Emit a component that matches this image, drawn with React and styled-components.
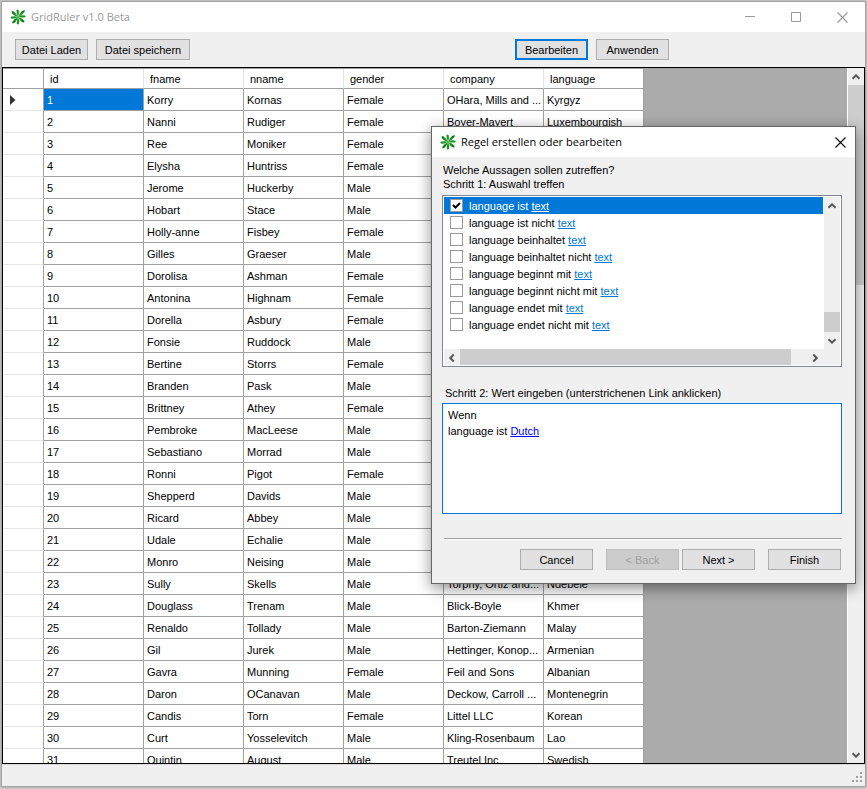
import React from "react";
import styled, { createGlobalStyle } from "styled-components";

const blue = "#0078d7";
const face = "#f0f0f0";
const line = "#a0a0a0";

const GlobalStyle = createGlobalStyle`
  *, *::before, *::after { box-sizing: border-box; }
  body {
    margin: 0;
    background: #d6d6d6;
    color: #000;
    font: 11px/14px "Liberation Sans", Arial, sans-serif;
  }
`;

const Desktop = styled.div`
  position: relative;
  display: flex;
  flex-direction: column;
  height: 100vh;
  padding: 1px 1px 2px;
  overflow: hidden;
`;

const Window = styled.main`
  flex: 1;
  min-height: 0;
  display: flex;
  flex-direction: column;
  border: 1px solid #a3a3a3;
  background: ${face};
  box-shadow: 0 0 4px rgba(0, 0, 0, 0.3);
`;

const TitleBar = styled.header`
  flex: none;
  display: flex;
  align-items: center;
  gap: 5px;
  height: 30px;
  padding-left: 8px;
  background: #fff;
  color: ${(p) => (p.$active ? "#000" : "#999")};
`;

const Title = styled.h1`
  flex: 1;
  margin: 0;
  font: 400 11px/16px "Open Sans", "Noto Sans", sans-serif;
`;

const CaptionButtons = styled.div`
  display: flex;
`;

const CaptionButton = styled.button`
  display: grid;
  place-items: center;
  width: ${(p) => (p.$narrow ? 30 : 46)}px;
  height: 30px;
  padding: 0;
  border: 0;
  background: none;
  color: inherit;
`;

const Toolbar = styled.div`
  flex: none;
  display: flex;
  justify-content: space-between;
  padding: 7px 196px 7px 13px;
`;

const ButtonGroup = styled.div`
  display: flex;
  gap: ${(p) => p.$gap || 8}px;
`;

const Button = styled.button`
  width: ${(p) => (p.$wide ? 94 : 73)}px;
  height: 21px;
  padding: 0;
  border: ${(p) => (p.$focused ? `2px solid ${blue}` : "1px solid #adadad")};
  background: #e1e1e1;
  color: #000;
  font: inherit;
  white-space: nowrap;
  &:disabled {
    border-color: #bfbfbf;
    background: #ccc;
    color: #a0a0a0;
  }
`;

const GridFrame = styled.section`
  flex: 1;
  min-height: 0;
  display: flex;
  border: 1px solid #000;
  background: #ababab;
`;

const GridView = styled.div`
  flex: 1;
  min-width: 0;
  overflow: hidden;
  border-top: 1px solid ${line};
`;

const Table = styled.table`
  width: 641px;
  table-layout: fixed;
  border-collapse: separate;
  border-spacing: 0;
  background: #fff;
`;

const MarkerCol = styled.col`
  width: 41px;
`;

const HeadCell = styled.th`
  height: 20px;
  padding: 0 6px;
  border-right: 1px solid #e5e5e5;
  border-bottom: 1px solid ${line};
  font-weight: 400;
  text-align: left;
  &:first-child, &:last-child { border-right-color: ${line}; }
`;

const RowHead = styled.th`
  height: 22px;
  padding: 0 0 0 7px;
  border-right: 1px solid ${line};
  border-bottom: 1px solid #e5e5e5;
  text-align: left;
  svg { display: block; }
`;

const Cell = styled.td`
  height: 22px;
  padding: 0 3px;
  border-right: 1px solid ${line};
  border-bottom: 1px solid ${line};
  background: ${(p) => (p.$selected ? blue : "#fff")};
  color: ${(p) => (p.$selected ? "#fff" : "#000")};
  white-space: nowrap;
  overflow: hidden;
`;

const VScroll = styled.div`
  flex: none;
  display: flex;
  flex-direction: column;
  width: 17px;
  border-left: 1px solid #fff;
  background: ${face};
`;

const HScroll = styled.div`
  display: flex;
  height: 16px;
  background: ${face};
`;

const ScrollButton = styled.button`
  flex: none;
  display: grid;
  place-items: center;
  width: 16px;
  height: 17px;
  padding: 0;
  border: 0;
  background: none;
`;

const Thumb = styled.div`
  flex: ${(p) => p.$share} 0 0;
  background: #cdcdcd;
`;

const Track = styled.div`
  flex: ${(p) => p.$share} 0 0;
`;

const StatusBar = styled.footer`
  flex: none;
  display: flex;
  align-items: flex-end;
  justify-content: flex-end;
  height: 22px;
  padding: 0 2px 3px 0;
  border-top: 1px solid #d7d7d7;
`;

const Dialog = styled.section`
  position: absolute;
  top: 126px;
  right: 11px;
  width: 425px;
  border: 1px solid #666;
  background: ${face};
  box-shadow: 0 4px 14px rgba(0, 0, 0, 0.45);
`;

const DialogBody = styled.div`
  display: flex;
  flex-direction: column;
  padding: 6px 13px 13px 10px;
`;

const Prompt = styled.p`
  margin: 0;
  padding-left: 1px;
`;

const ListBox = styled.div`
  display: grid;
  grid-template-columns: 1fr 17px;
  margin-top: 4px;
  padding: 1px;
  border: 1px solid #828790;
  background: #fff;
`;

const RuleList = styled.ul`
  height: 152px;
  margin: 0;
  padding: 0;
  list-style: none;
`;

const Rule = styled.li`
  display: flex;
  align-items: center;
  gap: 6px;
  height: 17px;
  padding-left: 6px;
  background: ${(p) => (p.$selected ? blue : "transparent")};
  color: ${(p) => (p.$selected ? "#fff" : "#000")};
`;

const CheckSlot = styled.span`
  display: grid;
  place-items: center;
  > * { grid-area: 1 / 1; }
  svg { pointer-events: none; }
`;

const CheckBox = styled.input`
  appearance: none;
  width: 13px;
  height: 13px;
  margin: 0;
  border: 1px solid #999;
  background: #fff;
`;

const RuleLink = styled.a`
  color: ${(p) => (p.$tone || blue)};
  text-decoration: underline;
`;

const StepLabel = styled.h2`
  margin: 19px 0 3px 3px;
  font: inherit;
`;

const ValueBox = styled.div`
  height: 111px;
  padding: 3px 5px;
  border: 1px solid ${blue};
  background: #fff;
  line-height: 16px;
  p { margin: 0; }
`;

const Divider = styled.hr`
  align-self: stretch;
  height: 2px;
  margin: 24px 0 9px 2px;
  border: 0;
  border-top: 1px solid ${line};
  border-bottom: 1px solid #fff;
`;

const Actions = styled.div`
  display: flex;
  justify-content: flex-end;
  gap: 13px;
  padding-right: 1px;
`;

const petals = [
  "M8 8 L6.8 4.5 6.4 1.2 7.6 .6 8.8 1.6 8.9 4.5Z",
  "M8 8 L9.8 4.8 12 2 14.6 1 14.6 2.8 12 5.4Z",
  "M8 8 L11.5 6.2 15 6.4 15.8 7.4 14.6 8.6 11.5 8.6Z",
  "M8 8 L11.6 9.6 14.4 11.8 14.2 13.4 12.4 13.2 10 11.2Z",
  "M8 8 L9.2 11.4 9 14.6 7.8 15.8 6.8 14.4 7 11.2Z",
  "M8 8 L6.6 11 4.4 14 2.4 14.6 2.4 12.8 4.6 10.2Z",
  "M8 8 L4.6 9.4 1.4 9.8 .4 8.8 1.4 7.6 4.6 7.2Z",
  "M8 8 L4.6 6.4 1.8 4.2 1.6 2.2 3.4 2.2 6 4.8Z",
];

const Clover = () => (
  <svg width="16" height="16" viewBox="0 0 16 16" aria-hidden="true">
    {petals.map((d, i) => (
      <path key={d} d={d} fill={i % 2 ? "#0a8010" : "#17981f"} />
    ))}
    <path d="M8 8 4 4.2M8 8 12 11.4M8 8 12.6 3.6" stroke="#5cbb60" strokeWidth=".5" />
  </svg>
);

const CloseIcon = () => (
  <svg width="11" height="11" viewBox="0 0 11 11" aria-hidden="true">
    <path d="M.5 .5 10.5 10.5M10.5 .5 .5 10.5" stroke="currentColor" strokeWidth="1.1" />
  </svg>
);

const chevrons = {
  up: "M1.5 6.7 5 3.3 8.5 6.7",
  down: "M1.5 3.3 5 6.7 8.5 3.3",
  left: "M6.7 1.5 3.3 5 6.7 8.5",
  right: "M3.3 1.5 6.7 5 3.3 8.5",
};

const Arrow = ({ dir }) => (
  <ScrollButton type="button" aria-label={`Scroll ${dir}`}>
    <svg width="10" height="10" viewBox="0 0 10 10" aria-hidden="true">
      <path d={chevrons[dir]} fill="none" stroke="#555" strokeWidth="2" />
    </svg>
  </ScrollButton>
);

const columns = ["id", "fname", "nname", "gender", "company", "language"];

const people = [
  ["Korry", "Kornas", "Female", "OHara, Mills and ...", "Kyrgyz"],
  ["Nanni", "Rudiger", "Female", "Boyer-Mayert", "Luxembourgish"],
  ["Ree", "Moniker", "Female"],
  ["Elysha", "Huntriss", "Female"],
  ["Jerome", "Huckerby", "Male"],
  ["Hobart", "Stace", "Male"],
  ["Holly-anne", "Fisbey", "Female"],
  ["Gilles", "Graeser", "Male"],
  ["Dorolisa", "Ashman", "Female"],
  ["Antonina", "Highnam", "Female"],
  ["Dorella", "Asbury", "Female"],
  ["Fonsie", "Ruddock", "Male"],
  ["Bertine", "Storrs", "Female"],
  ["Branden", "Pask", "Male"],
  ["Brittney", "Athey", "Female"],
  ["Pembroke", "MacLeese", "Male"],
  ["Sebastiano", "Morrad", "Male"],
  ["Ronni", "Pigot", "Female"],
  ["Shepperd", "Davids", "Male"],
  ["Ricard", "Abbey", "Male"],
  ["Udale", "Echalie", "Male"],
  ["Monro", "Neising", "Male"],
  ["Sully", "Skells", "Male", "Torphy, Ortiz and...", "Ndebele"],
  ["Douglass", "Trenam", "Male", "Blick-Boyle", "Khmer"],
  ["Renaldo", "Tollady", "Male", "Barton-Ziemann", "Malay"],
  ["Gil", "Jurek", "Male", "Hettinger, Konop...", "Armenian"],
  ["Gavra", "Munning", "Female", "Feil and Sons", "Albanian"],
  ["Daron", "OCanavan", "Male", "Deckow, Carroll ...", "Montenegrin"],
  ["Candis", "Torn", "Female", "Littel LLC", "Korean"],
  ["Curt", "Yosselevitch", "Male", "Kling-Rosenbaum", "Lao"],
  ["Quintin", "August", "Male", "Treutel Inc", "Swedish"],
];

const rules = [
  "language ist",
  "language ist nicht",
  "language beinhaltet",
  "language beinhaltet nicht",
  "language beginnt mit",
  "language beginnt nicht mit",
  "language endet mit",
  "language endet nicht mit",
];

const DataGrid = () => (
  <GridFrame>
    <GridView>
      <Table>
        <colgroup>
          <MarkerCol />
          {columns.map((c) => <col key={c} />)}
        </colgroup>
        <thead>
          <tr>
            <HeadCell />
            {columns.map((c) => <HeadCell key={c} scope="col">{c}</HeadCell>)}
          </tr>
        </thead>
        <tbody>
          {people.map((person, i) => (
            <tr key={i}>
              <RowHead>
                {i === 0 && (
                  <svg width="6" height="10" viewBox="0 0 6 10" aria-hidden="true">
                    <path d="M0 0 5.5 5 0 10Z" fill="#333" />
                  </svg>
                )}
              </RowHead>
              <Cell $selected={i === 0}>{i + 1}</Cell>
              {columns.slice(1).map((c, k) => <Cell key={c}>{person[k]}</Cell>)}
            </tr>
          ))}
        </tbody>
      </Table>
    </GridView>
    <VScroll>
      <Arrow dir="up" />
      <Thumb $share={200} />
      <Track $share={460} />
      <Arrow dir="down" />
    </VScroll>
  </GridFrame>
);

const RuleDialog = () => (
  <Dialog role="dialog" aria-labelledby="dialog-title">
    <TitleBar $active>
      <Clover />
      <Title as="h2" id="dialog-title">Regel erstellen oder bearbeiten</Title>
      <CaptionButton type="button" $narrow aria-label="Close"><CloseIcon /></CaptionButton>
    </TitleBar>
    <DialogBody>
      <Prompt>Welche Aussagen sollen zutreffen?</Prompt>
      <Prompt>Schritt 1: Auswahl treffen</Prompt>
      <ListBox>
        <RuleList>
          {rules.map((text, i) => (
            <Rule key={text} $selected={i === 0}>
              <CheckSlot>
                <CheckBox type="checkbox" id={`rule-${i}`} defaultChecked={i === 0} />
                {i === 0 && (
                  <svg width="9" height="9" viewBox="0 0 9 9" aria-hidden="true">
                    <path d="M1 4 3.5 6.5 8 2" fill="none" stroke="#000" strokeWidth="2" />
                  </svg>
                )}
              </CheckSlot>
              <span>
                <label htmlFor={`rule-${i}`}>{text}</label>{" "}
                <RuleLink href="#text" $tone={i === 0 ? "#fff" : blue}>text</RuleLink>
              </span>
            </Rule>
          ))}
        </RuleList>
        <VScroll>
          <Arrow dir="up" />
          <Track $share={97} />
          <Thumb $share={20} />
          <Arrow dir="down" />
        </VScroll>
        <HScroll>
          <Arrow dir="left" />
          <Thumb $share={330} />
          <Track $share={16} />
          <Arrow dir="right" />
        </HScroll>
        <HScroll />
      </ListBox>
      <StepLabel>Schritt 2: Wert eingeben (unterstrichenen Link anklicken)</StepLabel>
      <ValueBox>
        <p>Wenn</p>
        <p>language ist <RuleLink href="#value" $tone="#0000ff">Dutch</RuleLink></p>
      </ValueBox>
      <Divider />
      <Actions>
        <Button type="button">Cancel</Button>
        <ButtonGroup $gap={3}>
          <Button type="button" disabled>&lt; Back</Button>
          <Button type="button">Next &gt;</Button>
        </ButtonGroup>
        <Button type="button">Finish</Button>
      </Actions>
    </DialogBody>
  </Dialog>
);

export default function App() {
  return (
    <Desktop>
      <GlobalStyle />
      <Window>
        <TitleBar>
          <Clover />
          <Title>GridRuler v1.0 Beta</Title>
          <CaptionButtons>
            <CaptionButton type="button" aria-label="Minimize">
              <svg width="10" height="10" aria-hidden="true"><path d="M0 4.5H10" stroke="currentColor" /></svg>
            </CaptionButton>
            <CaptionButton type="button" aria-label="Maximize">
              <svg width="10" height="10" aria-hidden="true"><path d="M.5 .5H9.5V9.5H.5Z" fill="none" stroke="currentColor" /></svg>
            </CaptionButton>
            <CaptionButton type="button" aria-label="Close"><CloseIcon /></CaptionButton>
          </CaptionButtons>
        </TitleBar>
        <Toolbar>
          <ButtonGroup>
            <Button type="button">Datei Laden</Button>
            <Button type="button" $wide>Datei speichern</Button>
          </ButtonGroup>
          <ButtonGroup>
            <Button type="button" $focused>Bearbeiten</Button>
            <Button type="button">Anwenden</Button>
          </ButtonGroup>
        </Toolbar>
        <DataGrid />
        <StatusBar>
          <svg width="11" height="11" viewBox="0 0 11 11" aria-hidden="true">
            <path d="M8 0h2v2h-2zM4 4h2v2h-2zM8 4h2v2h-2zM0 8h2v2h-2zM4 8h2v2h-2zM8 8h2v2h-2z" fill="#a0a0a0" />
          </svg>
        </StatusBar>
      </Window>
      <RuleDialog />
    </Desktop>
  );
}
